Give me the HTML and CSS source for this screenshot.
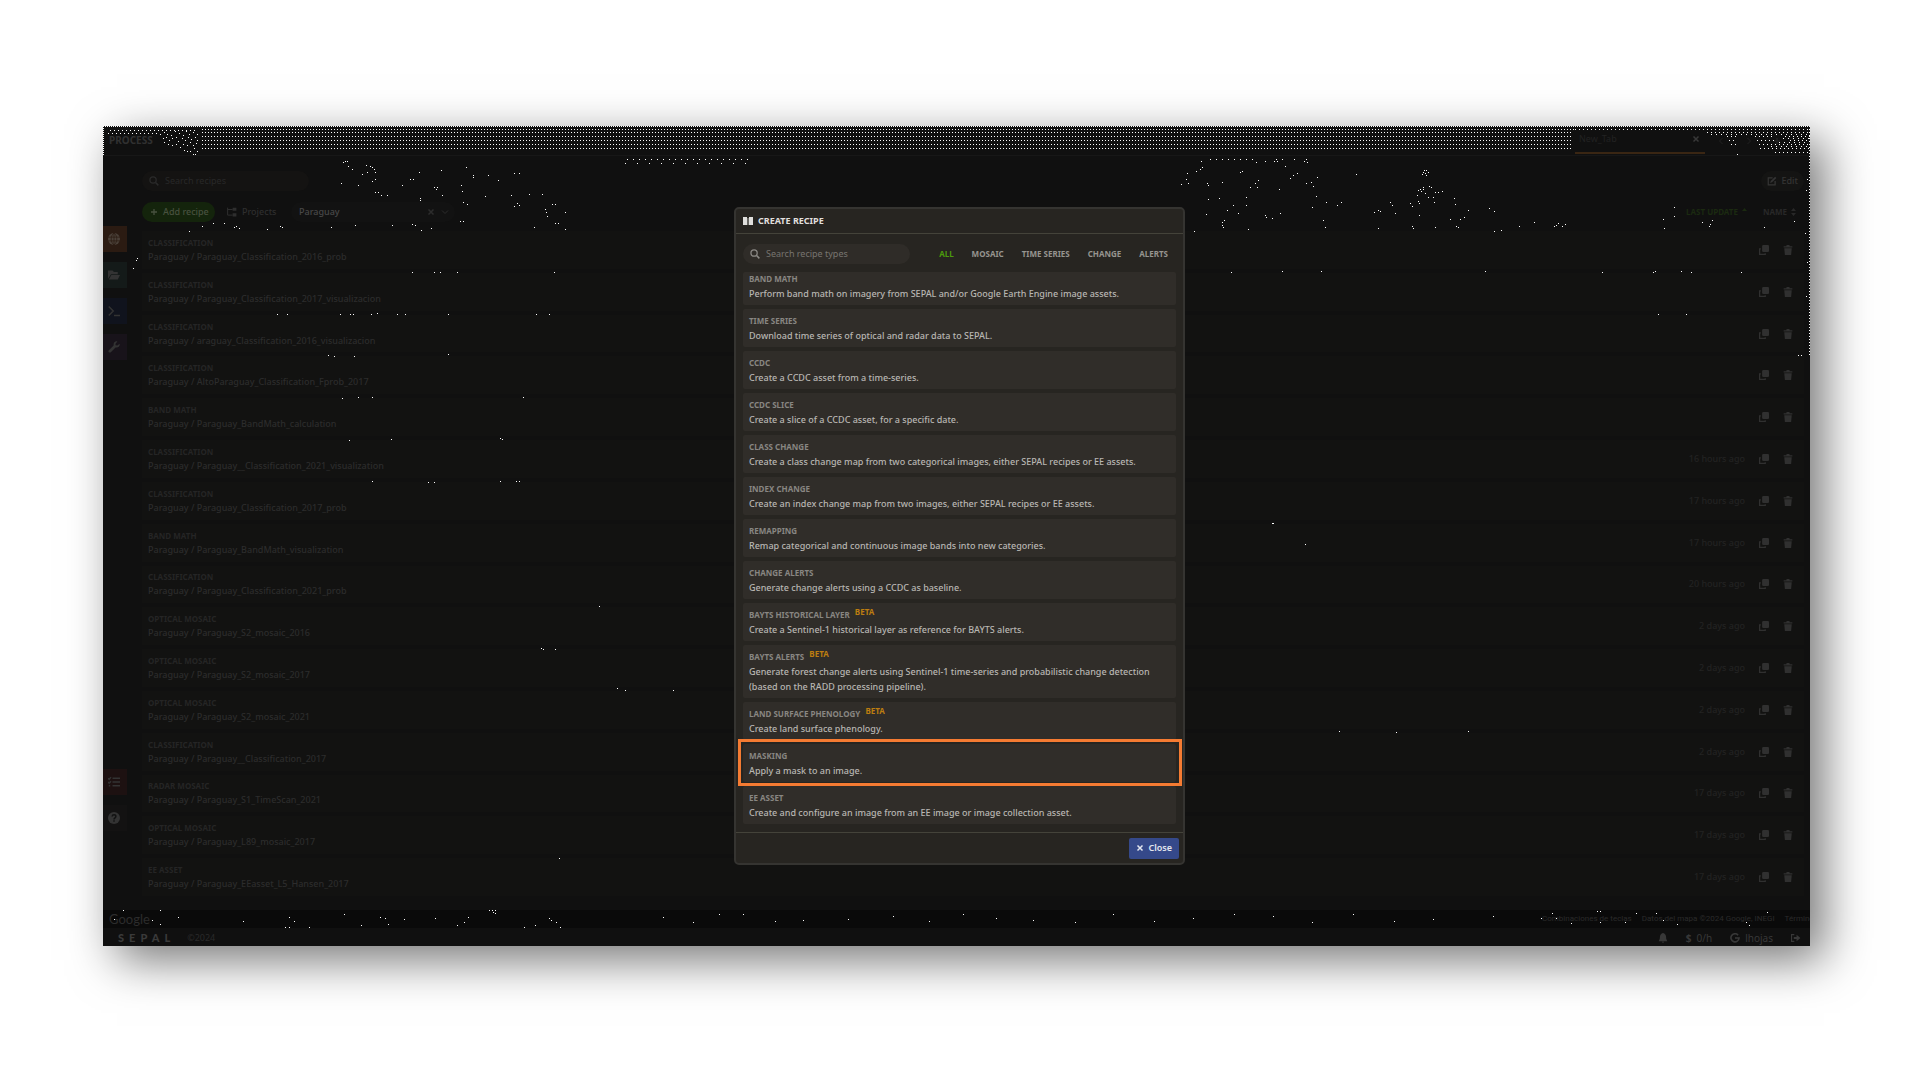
FILE: index.html
```html
<!DOCTYPE html>
<html lang="en">
<head>
<meta charset="utf-8">
<title>SEPAL - Create recipe</title>
<link rel="stylesheet" href="styles.css">
</head>
<body>
<svg class="defs" aria-hidden="true">
  <symbol id="search" viewBox="0 0 16 16"><circle cx="6.5" cy="6.5" r="5" fill="none" stroke="currentColor" stroke-width="2"/><path d="M10.5 10.5 15 15" stroke="currentColor" stroke-width="2.4"/></symbol>
  <symbol id="plus" viewBox="0 0 16 16"><path d="M8 2v12M2 8h12" stroke="currentColor" stroke-width="2.6"/></symbol>
  <symbol id="cross" viewBox="0 0 16 16"><path d="m3 3 10 10M13 3 3 13" stroke="currentColor" stroke-width="3"/></symbol>
  <symbol id="down" viewBox="0 0 16 16"><path d="m2 5 6 6 6-6" fill="none" stroke="currentColor" stroke-width="2"/></symbol>
  <symbol id="left" viewBox="0 0 16 16"><path d="m11 2-6 6 6 6" fill="none" stroke="currentColor" stroke-width="2"/></symbol>
  <symbol id="right" viewBox="0 0 16 16"><path d="m5 2 6 6-6 6" fill="none" stroke="currentColor" stroke-width="2"/></symbol>
  <symbol id="tree" viewBox="0 0 16 16"><path d="M1 1v12h8M1 4h8" fill="none" stroke="currentColor" stroke-width="1.6"/><path d="M9 1h6v5H9zM9 10h6v5H9z" fill="currentColor"/></symbol>
  <symbol id="copy" viewBox="0 0 16 16"><path d="M7 0h7q2 0 2 2v7q0 2-2 2H7q-2 0-2-2V2q0-2 2-2z" fill="currentColor"/><path d="M3 6H1v9h9v-2" fill="none" stroke="currentColor" stroke-width="2"/></symbol>
  <symbol id="trash" viewBox="0 0 16 16"><path d="M1 2h4l1-2h4l1 2h4v2H1zM2 5h12l-1 11H3z" fill="currentColor"/></symbol>
  <symbol id="edit" viewBox="0 0 16 16"><path d="M9 3H2v11h11V8" fill="none" stroke="currentColor" stroke-width="2"/><path d="m5 11 1-3 7-7 2 2-7 7z" fill="currentColor"/></symbol>
  <symbol id="globe" viewBox="0 0 16 16"><circle cx="8" cy="8" r="8" fill="currentColor"/><path d="M0 5.500h16M0 10.500h16M8 0v16M8 0c-5 4-5 12 0 16M8 0c5 4 5 12 0 16" fill="none" stroke="#2b1b12" stroke-width="1"/></symbol>
  <symbol id="folder" viewBox="0 0 16 16"><path d="M0 2h6l2 2h5v3H4l-4 6zM4.500 8H16l-3 6H1z" fill="currentColor"/></symbol>
  <symbol id="prompt" viewBox="0 0 16 16"><path d="m1 2 6 6-6 6M8 14h8" fill="none" stroke="currentColor" stroke-width="2"/></symbol>
  <symbol id="wrench" viewBox="0 0 16 16"><path d="M15.500 3.500 12.500 6 10 5.500V3.500L12.500.5C9 0 7 2.500 7.500 6L.8 12.500c-1 2 1 3.700 2.700 2.700L10 8.500c3.500.8 6.200-1.500 5.500-5z" fill="currentColor"/></symbol>
  <symbol id="tasks" viewBox="0 0 16 16"><path d="m0 3 1.500 1.500L4 1.500M0 8l1.500 1.500L4 7M1 13h2M6 3h10M6 8h10M6 13h10" fill="none" stroke="currentColor" stroke-width="2"/></symbol>
  <symbol id="help" viewBox="0 0 16 16"><circle cx="8" cy="8" r="8" fill="currentColor"/><path d="M5.500 6c.2-3 5-3 5 0 0 1.800-2.500 1.700-2.500 4M8 11v2" fill="none" stroke="#121212" stroke-width="2"/></symbol>
  <symbol id="book" viewBox="0 0 10 8"><path d="M0 0h4v8H0zM6 0h4v8H6z" fill="currentColor"/><path d="M4 1h2v7H4z" fill="currentColor" opacity=".35"/></symbol>
  <symbol id="sort" viewBox="0 0 10 16"><path d="m0 6 5-6 5 6zM0 10h10l-5 6z" fill="currentColor"/></symbol>
  <symbol id="sortup" viewBox="0 0 10 16"><path d="m0 6 5-6 5 6z" fill="currentColor"/></symbol>
  <symbol id="bell" viewBox="0 0 16 16"><path d="M8 0c-3 1-5 3-5 7 0 3-1 4-2 6h14c-1-2-2-3-2-6 0-4-2-6-5-7zM6 14h4l-2 2z" fill="currentColor"/></symbol>
  <symbol id="google" viewBox="0 0 16 16"><path d="M13 3.500A6.500 6.500 0 1 0 14.500 8H8" fill="none" stroke="currentColor" stroke-width="2.600"/></symbol>
  <symbol id="exit" viewBox="0 0 18 16"><path d="M6 2H1v12h5" fill="none" stroke="currentColor" stroke-width="2"/><path d="M5 6h5V2l7 6-7 6v-4H5z" fill="currentColor"/></symbol>
</svg>
<div class="app">
  <header class="topbar">
    <h1 class="section-name">PROCESS</h1>
    <div class="tab"><span>New_Tab</span><button class="bare" aria-label="Close tab"><svg class="i8"><use href="#cross"/></svg></button></div>
    <nav class="tabnav"><button class="bare" aria-label="Previous"><svg class="i8"><use href="#left"/></svg></button><button class="bare" aria-label="Next"><svg class="i8"><use href="#right"/></svg></button><button class="bare" aria-label="New tab"><svg class="i8"><use href="#plus"/></svg></button></nav>
  </header>
  <div class="body">
    <nav class="sidebar">
      <button class="side orange" aria-label="Process"><svg class="i12"><use href="#globe"/></svg></button>
      <button class="side teal" aria-label="Files"><svg class="i12"><use href="#folder"/></svg></button>
      <button class="side blue" aria-label="Terminal"><svg class="i12"><use href="#prompt"/></svg></button>
      <button class="side purple" aria-label="Apps"><svg class="i12"><use href="#wrench"/></svg></button>
      <span class="push"></span>
      <button class="side red" aria-label="Tasks"><svg class="i12"><use href="#tasks"/></svg></button>
      <button class="side" aria-label="Help"><svg class="i12"><use href="#help"/></svg></button>
    </nav>
    <main class="content">
      <div class="bar">
        <label class="field dark"><svg class="i10"><use href="#search"/></svg><input type="text" placeholder="Search recipes" aria-label="Search recipes"></label>
        <button class="pill edit"><svg class="i10"><use href="#edit"/></svg>Edit</button>
      </div>
      <div class="bar filters">
        <button class="pill add"><svg class="i8"><use href="#plus"/></svg>Add recipe</button>
        <button class="pill projects"><svg class="i10"><use href="#tree"/></svg>Projects</button>
        <label class="project"><input type="text" value="Paraguay" aria-label="Project"><svg class="i8"><use href="#cross"/></svg><svg class="i8"><use href="#down"/></svg></label>
        <span class="push"></span>
        <button class="bare sort green">LAST UPDATE <svg class="isort"><use href="#sortup"/></svg></button>
        <button class="bare sort">NAME <svg class="isort"><use href="#sort"/></svg></button>
      </div>
      <ul class="recipes">
        <li><div><h2>CLASSIFICATION</h2><p>Paraguay / Paraguay_Classification_2016_prob</p></div><time></time><svg class="i10"><use href="#copy"/></svg><svg class="i10"><use href="#trash"/></svg></li>
        <li><div><h2>CLASSIFICATION</h2><p>Paraguay / Paraguay_Classification_2017_visualizacion</p></div><time></time><svg class="i10"><use href="#copy"/></svg><svg class="i10"><use href="#trash"/></svg></li>
        <li><div><h2>CLASSIFICATION</h2><p>Paraguay / araguay_Classification_2016_visualizacion</p></div><time></time><svg class="i10"><use href="#copy"/></svg><svg class="i10"><use href="#trash"/></svg></li>
        <li><div><h2>CLASSIFICATION</h2><p>Paraguay / AltoParaguay_Classification_Fprob_2017</p></div><time></time><svg class="i10"><use href="#copy"/></svg><svg class="i10"><use href="#trash"/></svg></li>
        <li><div><h2>BAND MATH</h2><p>Paraguay / Paraguay_BandMath_calculation</p></div><time></time><svg class="i10"><use href="#copy"/></svg><svg class="i10"><use href="#trash"/></svg></li>
        <li><div><h2>CLASSIFICATION</h2><p>Paraguay / Paraguay__Classification_2021_visualization</p></div><time>16 hours ago</time><svg class="i10"><use href="#copy"/></svg><svg class="i10"><use href="#trash"/></svg></li>
        <li><div><h2>CLASSIFICATION</h2><p>Paraguay / Paraguay_Classification_2017_prob</p></div><time>17 hours ago</time><svg class="i10"><use href="#copy"/></svg><svg class="i10"><use href="#trash"/></svg></li>
        <li><div><h2>BAND MATH</h2><p>Paraguay / Paraguay_BandMath_visualization</p></div><time>17 hours ago</time><svg class="i10"><use href="#copy"/></svg><svg class="i10"><use href="#trash"/></svg></li>
        <li><div><h2>CLASSIFICATION</h2><p>Paraguay / Paraguay_Classification_2021_prob</p></div><time>20 hours ago</time><svg class="i10"><use href="#copy"/></svg><svg class="i10"><use href="#trash"/></svg></li>
        <li><div><h2>OPTICAL MOSAIC</h2><p>Paraguay / Paraguay_S2_mosaic_2016</p></div><time>2 days ago</time><svg class="i10"><use href="#copy"/></svg><svg class="i10"><use href="#trash"/></svg></li>
        <li><div><h2>OPTICAL MOSAIC</h2><p>Paraguay / Paraguay_S2_mosaic_2017</p></div><time>2 days ago</time><svg class="i10"><use href="#copy"/></svg><svg class="i10"><use href="#trash"/></svg></li>
        <li><div><h2>OPTICAL MOSAIC</h2><p>Paraguay / Paraguay_S2_mosaic_2021</p></div><time>2 days ago</time><svg class="i10"><use href="#copy"/></svg><svg class="i10"><use href="#trash"/></svg></li>
        <li><div><h2>CLASSIFICATION</h2><p>Paraguay / Paraguay__Classification_2017</p></div><time>2 days ago</time><svg class="i10"><use href="#copy"/></svg><svg class="i10"><use href="#trash"/></svg></li>
        <li><div><h2>RADAR MOSAIC</h2><p>Paraguay / Paraguay_S1_TimeScan_2021</p></div><time>17 days ago</time><svg class="i10"><use href="#copy"/></svg><svg class="i10"><use href="#trash"/></svg></li>
        <li><div><h2>OPTICAL MOSAIC</h2><p>Paraguay / Paraguay_L89_mosaic_2017</p></div><time>17 days ago</time><svg class="i10"><use href="#copy"/></svg><svg class="i10"><use href="#trash"/></svg></li>
        <li><div><h2>EE ASSET</h2><p>Paraguay / Paraguay_EEasset_L5_Hansen_2017</p></div><time>17 days ago</time><svg class="i10"><use href="#copy"/></svg><svg class="i10"><use href="#trash"/></svg></li>
      </ul>
    </main>
  </div>
  <div class="mapstrip"><span class="gmap">Google</span><span class="credits"><span>Combinaciones de teclas</span><span>Datos del mapa ©2024 Google, INEGI</span><span>Términos</span></span></div>
  <footer class="footer">
    <strong class="logo">SEPAL</strong><span>©2024</span><span class="push"></span>
    <svg class="i10"><use href="#bell"/></svg>
    <span class="stat"><b>$</b> 0/h</span>
    <span class="stat"><svg class="i10"><use href="#google"/></svg>lhojas</span>
    <svg class="i10"><use href="#exit"/></svg>
  </footer>

  <svg class="specks" aria-hidden="true" stroke="#fff" stroke-width="3" shape-rendering="crispEdges">
    <g transform="translate(-13 -16) scale(.33333)"><path d="M759 157h3M765 154h3M771 154h3M774 169h3M786 178h3M816 193h3M828 166h3M831 187h3M840 169h3M846 172h3M852 178h3M855 187h3M855 208h3M846 214h3M804 226h3M753 220h3M855 247h3M864 247h3M873 256h3M891 256h3M936 226h3M960 208h3M969 208h3M987 187h3M990 265h3M990 271h3M1032 232h3M1038 238h3M1041 232h3M1056 256h3M1053 181h3M1113 226h3M1116 244h3M1119 277h3M1131 283h3M1128 172h3M1149 196h3M1149 202h3M1194 196h3M1185 259h3M1224 211h3M1272 190h3M1287 190h3M1263 256h3M1272 289h3M1281 280h3M1287 286h3M1317 253h3M1356 253h3M1386 283h3M1395 283h3M1365 298h3M1368 307h3M1371 319h3M1332 352h3M1395 340h3M1404 340h3M1425 307h3M1425 358h3M1110 334h3M1119 334h3M297 364h3M336 349h3M369 340h3M402 340h3M432 352h3M438 349h3M447 355h3M531 358h3M570 349h3M576 352h3M723 352h3M795 346h3M906 346h3M966 343h3M975 346h3M993 361h3M1023 355h3M141 445h3M138 451h3M129 475h3M966 487h3M1032 487h3M1050 487h3M1101 487h3M1392 487h3M561 613h3M591 613h3M750 613h3M780 613h3M789 613h3M843 613h3M861 610h3M921 613h3M945 613h3M1074 613h3M1338 613h3M1377 613h3M714 736h3M732 739h3M792 739h3M1074 733h3"/></g>
    <g transform="translate(-13 234) scale(.33333)"><path d="M756 115h3M804 112h3M846 112h3M1299 112h3M777 241h3M903 238h3M1230 235h3M1236 238h3M846 364h3M1014 367h3M1032 367h3M1230 364h3M1278 364h3M1287 364h3M1353 865h3M1359 868h3M1395 868h3"/></g>
    <g transform="translate(-13 514) scale(.33333)"><path d="M1407 655h3M99 811h3M210 811h3M72 838h3M186 841h3M210 853h3M264 832h3M459 844h3M597 832h3M612 844h3M585 862h3M597 862h3M657 862h3M762 823h3M813 856h3M870 832h3M885 835h3M894 853h3M942 838h3M1035 835h3M1101 856h3M1122 847h3M1134 832h3M1197 811h3M1206 811h3M1215 811h3M1209 817h3M1215 820h3M1302 862h3M1335 856h3M1377 835h3M1383 841h3M1398 847h3M1410 862h3"/></g>
    <g transform="translate(1077 -6) scale(.33333)"><path d="M90 118h3M108 118h3M126 118h3M144 118h3M162 118h3M180 118h3M198 118h3M216 118h3M228 127h3M255 124h3M282 124h3M288 118h3M291 124h3M306 118h3M315 139h3M342 118h3M378 118h3M372 124h3M381 127h3M63 124h3M66 142h3M60 148h3M48 154h3M21 160h3M18 178h3M24 190h3M3 193h3M81 190h3M84 196h3M126 187h3M180 157h3M186 154h3M210 202h3M225 190h3M234 181h3M231 202h3M297 208h3M330 175h3M339 166h3M351 160h3M378 190h3M393 187h3M399 199h3M411 172h3M408 229h3M396 262h3M438 247h3M471 256h3M483 247h3M528 163h3M84 238h3M117 235h3M78 283h3M141 271h3M159 256h3M174 280h3M198 232h3M198 256h3M255 286h3M258 292h3M276 295h3M300 280h3M429 301h3M435 322h3M132 301h3M126 307h3M126 316h3M129 322h3M204 328h3M42 334h3M582 277h3M594 271h3M600 274h3M594 325h3M630 247h3M636 256h3M645 280h3M690 250h3M696 259h3M714 244h3M717 250h3M711 226h3M714 211h3M720 208h3M723 214h3M729 202h3M729 208h3M735 220h3M747 199h3M753 202h3M744 232h3M759 232h3M765 217h3M774 217h3M786 214h3M762 247h3M726 163h3M729 157h3M732 151h3M738 151h3M735 160h3M744 157h3M738 166h3M717 286h3M696 319h3M699 325h3M765 322h3M822 235h3M825 253h3M864 271h3M852 292h3M840 298h3M810 298h3M828 319h3M834 322h3M927 265h3M942 274h3M942 334h3M963 331h3M1017 319h3M1062 307h3M1122 319h3M1128 316h3M1134 310h3M1146 319h3M1155 313h3M153 457h3M306 454h3M423 454h3M915 454h3"/></g>
    <g transform="translate(1427 -16) scale(.33333)"><path d="M432 292h3M432 319h3M399 328h3M402 355h3M516 337h3M546 331h3M540 343h3M537 349h3M702 352h3M792 334h3M825 370h3M216 487h3M369 487h3M375 484h3M453 484h3M483 487h3M633 487h3M384 613h3M468 613h3M804 736h3M813 736h3M828 559h3M831 457h3M828 241h3M831 208h3"/></g>
    <g transform="translate(-3 -6) scale(.33333)"><path d="M180 43h3M192 37h3M201 43h3M213 46h3M225 34h3M237 40h3M249 46h3M258 34h3M267 43h3M279 37h3M291 43h3M189 55h3M198 52h3M207 61h3M216 55h3M228 52h3M234 64h3M246 55h3M255 61h3M264 52h3M273 58h3M285 52h3M291 61h3M192 67h3M204 73h3M216 76h3M228 73h3M240 82h3M249 73h3M261 76h3M270 67h3M279 76h3M288 70h3M252 91h3M261 94h3M270 94h3M282 85h3M291 94h3M279 103h3M285 103h3"/><path d="M24 40h156M30 31h264" stroke-dasharray="3 9"/></g>
    <g stroke-width="1">
      <path stroke-dasharray="1 2" d="M99 3.500h1373M99 6.500h1371M99 10.500h1371M99 14.500h1371M99 18.500h1371M99 22.500h1371"/>
      <path stroke-dasharray="1 3" d="M1472 3.500h235M1604 6.500h103M1624 10.500h10M1652 10.500h18M1682 10.500h25M1626 14.500h8M1654 14.500h20M1687 14.500h20M1628 18.500h6M1656 18.500h51M1657 22.500h50M1672 26.500h34"/>
      <path stroke-dasharray="1 4" d="M1608 8.500h96M1680 12.500h26M1676 16.500h30M1668 20.500h38M1634 28.500h1"/>
      <path d="M524 33.500h126" stroke-dasharray="1 5"/>
      <path d="M522 37.500h124" stroke-dasharray="1 11"/>
      <path d="M0 .5h1707M.5 0v30" stroke-dasharray="1 1"/>
      <path d="M1706.500 0v230" stroke-dasharray="1 2"/>
      <path d="M496 480.500h1M514 562.500h1M522 564.500h1M570 564.500h1M1169 397.500h1M1170 397.500h1M1202 418.500h1M1236 605.500h1M1293 606.500h1M1365 605.500h1M560 791.500h1M590 796.500h1M616 788.500h1M640 788.500h1M672 795.500h1M700 794.500h1M745 793.500h1M790 790.500h1M826 795.500h1M860 788.500h1M893 792.500h1M930 794.500h1M972 796.500h1M1010 788.500h1M1051 795.500h1M1090 792.500h1M1131 788.500h1M1170 790.500h1M1209 796.500h1M1250 788.500h1M1291 795.500h1M1330 793.500h1M1390 790.500h1M1453 792.500h1M1438 792.500h1M1449 787.500h1M1468 797.500h1M1494 785.500h1M1497 785.500h1M1497 796.500h1M1522 796.500h1M1533 787.500h1M1553 787.500h1M1560 794.500h1M1574 798.500h1M1643 796.500h1M1664 786.500h1M1646 799.500h1"/>
    </g>
  </svg>

  <div class="overlay">
    <section class="dialog" role="dialog" aria-labelledby="dialog-title">
      <header class="dialog-head"><svg class="ibook"><use href="#book"/></svg><h2 id="dialog-title">CREATE RECIPE</h2></header>
      <div class="dialog-body">
        <div class="tools">
          <label class="field"><svg class="i10"><use href="#search"/></svg><input type="text" placeholder="Search recipe types" aria-label="Search recipe types"></label>
          <div class="types"><button class="bare on">ALL</button><button class="bare">MOSAIC</button><button class="bare">TIME SERIES</button><button class="bare">CHANGE</button><button class="bare">ALERTS</button></div>
        </div>
        <ul class="kinds">
          <li class="cut"><h3>BAND MATH</h3><p>Perform band math on imagery from SEPAL and/or Google Earth Engine image assets.</p></li>
          <li><h3>TIME SERIES</h3><p>Download time series of optical and radar data to SEPAL.</p></li>
          <li><h3>CCDC</h3><p>Create a CCDC asset from a time-series.</p></li>
          <li><h3>CCDC SLICE</h3><p>Create a slice of a CCDC asset, for a specific date.</p></li>
          <li><h3>CLASS CHANGE</h3><p>Create a class change map from two categorical images, either SEPAL recipes or EE assets.</p></li>
          <li><h3>INDEX CHANGE</h3><p>Create an index change map from two images, either SEPAL recipes or EE assets.</p></li>
          <li><h3>REMAPPING</h3><p>Remap categorical and continuous image bands into new categories.</p></li>
          <li><h3>CHANGE ALERTS</h3><p>Generate change alerts using a CCDC as baseline.</p></li>
          <li><h3>BAYTS HISTORICAL LAYER <sup>BETA</sup></h3><p>Create a Sentinel-1 historical layer as reference for BAYTS alerts.</p></li>
          <li><h3>BAYTS ALERTS <sup>BETA</sup></h3><p>Generate forest change alerts using Sentinel-1 time-series and probabilistic change detection<br>(based on the RADD processing pipeline).</p></li>
          <li><h3>LAND SURFACE PHENOLOGY <sup>BETA</sup></h3><p>Create land surface phenology.</p></li>
          <li class="marked"><h3>MASKING</h3><p>Apply a mask to an image.</p></li>
          <li><h3>EE ASSET</h3><p>Create and configure an image from an EE image or image collection asset.</p></li>
        </ul>
      </div>
      <footer class="dialog-foot"><button class="close"><svg class="i8"><use href="#cross"/></svg>Close</button></footer>
    </section>
  </div>
</div>
</body>
</html>
```
FILE: styles.css
```css
* { box-sizing: border-box; margin: 0; padding: 0; }
body {
  min-height: 100vh;
  display: flex;
  padding: 126px 110px 134px 103px;
  background: #fff;
  font: 9px/12px "Noto Sans", "Open Sans", sans-serif;
  color: #282828;
}
button, input { font: inherit; color: inherit; background: none; border: 0; outline: 0; }
button { white-space: nowrap; }
h1, h2, h3 { font-size: 9px; line-height: 12px; font-weight: 700; }
ul { list-style: none; }
svg { flex: none; }
.defs { position: absolute; width: 0; height: 0; }
.i8 { width: 8px; height: 8px; }
.i10 { width: 10px; height: 10px; }
.i12 { width: 12px; height: 12px; }
.isort { width: 5px; height: 8px; }
.ibook { width: 10px; height: 8px; }
.push { flex: 1; }
.bare { display: flex; align-items: center; }

.app {
  position: relative;
  flex: 1;
  min-width: 0;
  display: flex;
  flex-direction: column;
  background: #101010;
  box-shadow: 14px 14px 44px rgba(0, 0, 0, .54);
}

.topbar { display: flex; height: 30px; border-bottom: 1px solid #171717; }
.section-name { flex: 1; padding: 8px 0 0 6px; font-size: 10px; color: #303030; }
.tab {
  width: 130px;
  height: 28px;
  display: flex;
  align-items: center;
  justify-content: space-between;
  padding: 0 5px 0 4px;
  border-bottom: 2px solid #3a2613;
  color: #222;
}
.tab button { color: #383838; }
.tabnav { width: 105px; display: flex; align-items: center; gap: 20px; padding-left: 12px; color: #222; }

.body { flex: 1; display: flex; }
.sidebar { width: 24px; display: flex; flex-direction: column; gap: 10px; padding: 70px 0 79px; }
.side { height: 26px; display: flex; align-items: center; padding-left: 5px; background: #131212; color: #333; }
.orange { background: #2b1b12; color: #4a4038; }
.teal { background: #141a19; }
.blue { background: #10131d; }
.purple { background: #18131a; }
.red { background: #1d1111; }

.content { flex: 1; min-width: 0; display: flex; flex-direction: column; padding: 15px 6px 14px 15px; }
.bar { display: flex; align-items: center; justify-content: space-between; height: 20px; }
.filters { justify-content: flex-start; margin: 11px 0 9px; gap: 10px; }
.field {
  width: 167px;
  height: 20px;
  display: flex;
  align-items: center;
  gap: 6px;
  padding: 0 7px;
  border-radius: 10px;
  background: #2f2c28;
  color: #8c8a86;
}
.field input { flex: 1; min-width: 0; }
.field input::placeholder { color: #77746f; }
.dark { background: #141312; color: #2a2a2a; }
.dark input::placeholder { color: #282828; }
.pill { height: 20px; display: flex; align-items: center; gap: 5px; padding: 0 6px; border-radius: 10px; font-weight: 500; }
.edit { background: #141413; color: #343434; }
.add { width: 73px; padding: 0 8px; background: #14240c; color: #48513f; }
.projects { width: 56px; gap: 5px; padding: 0 2px; color: #2e2e2e; }
.project { width: 164px; height: 20px; display: flex; align-items: center; gap: 6px; padding: 0 6px 0 8px; border-radius: 10px; background: #121212; color: #2c2c2c; }
.project input { flex: 1; min-width: 0; color: #484848; font-weight: 500; }
.sort { gap: 4px; font-weight: 700; font-size: 8px; }
.green { color: #1b2a10; }
.filters .sort:last-child { padding: 0 8px 0 6px; }

.recipes { flex: 1; display: grid; grid-auto-rows: 1fr; row-gap: 4px; }
.recipes li { display: flex; align-items: center; padding: 0 11px 0 6px; background: #121211; }
.recipes li > div { flex: 1; color: #2c2c2c; font-weight: 500; }
.recipes h2 { font-size: 8px; color: #252525; margin-bottom: 2px; }
.recipes time { margin-right: 14px; color: #222; font-weight: 500; }
.recipes svg { color: #303030; }
.recipes svg + svg { margin-left: 14px; }

.mapstrip { height: 18px; display: flex; align-items: center; justify-content: space-between; padding-left: 6px; background: #0a0a0a; overflow: hidden; }
.gmap { font: 13px/18px Lato, sans-serif; color: #2c2c2c; }
.credits { display: flex; gap: 10px; margin-right: -8px; font: 8px/18px Roboto, sans-serif; color: #2a2a2a; }
.footer { height: 18px; display: flex; align-items: center; gap: 18px; padding: 2px 9px 0 15px; font-size: 10px; color: #383838; }
.logo { font: 900 11px/16px Lato, sans-serif; letter-spacing: 5px; margin-right: -6px; color: #3a3a3a; }
.logo + span { font-size: 9px; color: #2a2a2a; }
.stat { display: flex; align-items: center; gap: 5px; }

.specks { position: absolute; inset: 0; width: 100%; height: 100%; pointer-events: none; }

.overlay { position: absolute; inset: 0; display: grid; place-items: center; padding-left: 6px; }
.dialog {
  width: 451px;
  border: 2px solid #353431;
  border-radius: 5px;
  background: #272521;
  color: #b8b6b2;
}
.dialog-head { height: 25px; display: flex; align-items: center; gap: 5px; padding: 0 7px; border-bottom: 1px solid #44433a; color: #e0dfdd; }
.dialog-body { padding: 10px 7px 8px; }
.tools { display: flex; align-items: center; justify-content: space-between; margin-bottom: 8px; }
.types { display: flex; gap: 18px; padding-right: 8px; font-size: 8px; font-weight: 700; color: #96948f; }
.types .on { color: #4b9a0c; }
.kinds { display: flex; flex-direction: column; gap: 4px; }
.kinds li { position: relative; padding: 6px 6px 4px; border-radius: 2px; background: #302d29; }
.kinds p { margin-top: 1px; line-height: 15px; font-weight: 500; white-space: nowrap; }
.kinds h3 { height: 12px; font-size: 8px; color: #888682; }
.kinds .cut { padding-top: 1px; }
.kinds sup { margin-left: 3px; font-size: 8px; line-height: 0; vertical-align: 3px; color: #bd7d10; }
.marked::after { content: ""; position: absolute; inset: -5px -6px -4px -5px; border: 3px solid #f57b32; }
.dialog-foot { height: 31px; display: flex; align-items: center; justify-content: flex-end; padding: 0 4px; border-top: 1px solid #44433a; }
.close { height: 21px; display: flex; align-items: center; gap: 4px; padding: 0 7px; border-radius: 2px; background: #35498a; color: #e2e5ee; font-weight: 600; }
```
